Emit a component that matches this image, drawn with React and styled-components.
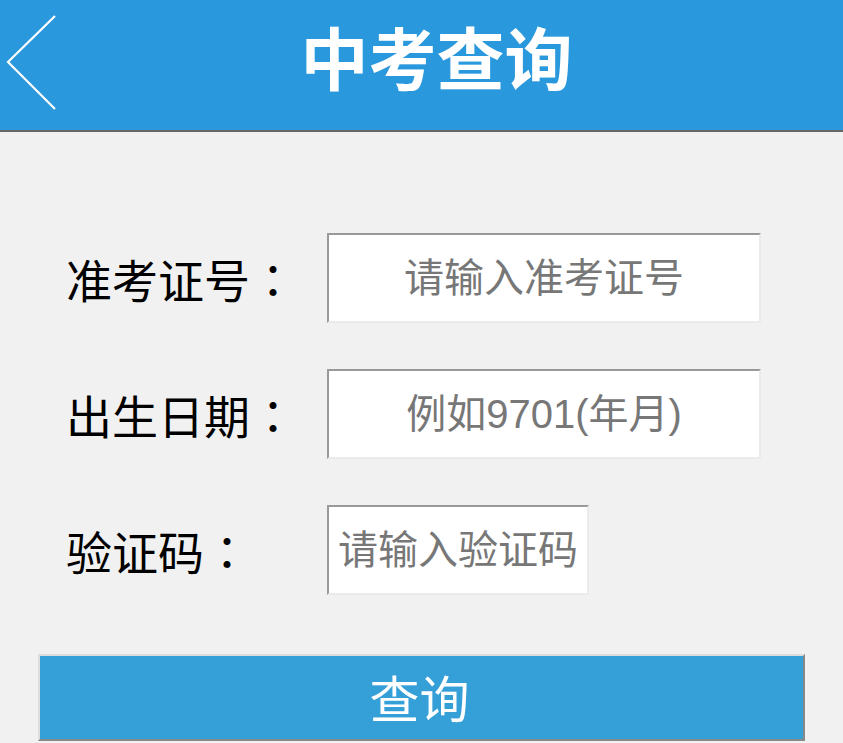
import React from 'react';
import styled, { createGlobalStyle } from 'styled-components';

const GlobalStyle = createGlobalStyle`
  body {
    margin: 0;
    background: #f1f1f1;
    font-family: "Liberation Sans", "Noto Sans CJK SC", sans-serif;
  }
`;

const Header = styled.header`
  position: relative;
  height: 130px;
  background: #2a98dc;
  border-bottom: 2px solid #666;
  display: flex;
  align-items: center;
  justify-content: center;
`;

const BackButton = styled.button`
  position: absolute;
  left: 0;
  top: 0;
  width: 70px;
  height: 130px;
  padding: 0;
  border: none;
  background: none;
  cursor: pointer;
`;

const Title = styled.h1`
  margin: 0 0 20px 30px;
  color: #fff;
  font-size: 68px;
  font-weight: bold;
  font-family: "Noto Sans CJK SC", sans-serif;
`;

const Form = styled.form`
  display: grid;
  grid-template-columns: 261px auto;
  row-gap: 46px;
  align-items: center;
  padding: 101px 0 0 66px;
`;

const Label = styled.label`
  color: #000;
  font-size: 46px;
  font-family: "Noto Sans CJK SC", sans-serif;
  white-space: nowrap;
  overflow: visible;
`;

const Colon = styled.span`
  font-family: "Noto Sans CJK TC", sans-serif;
`;

const Input = styled.input`
  box-sizing: border-box;
  width: ${(p) => p.$w}px;
  height: 90px;
  background: #fff;
  border-style: solid;
  border-width: 2px;
  border-color: #999 #ebebeb #ebebeb #999;
  font-size: 40px;
  font-family: "Liberation Sans", "Noto Sans CJK SC", sans-serif;
  text-align: center;
  padding: 0;
  outline: none;

  &::placeholder {
    color: #777;
  }
`;

const SubmitButton = styled.button`
  display: block;
  box-sizing: border-box;
  margin: 59px 0 0 38px;
  width: 767px;
  height: 87px;
  background: #359fd8;
  border-style: solid;
  border-width: 2px;
  border-color: #ddd #888 #888 #ddd;
  color: #fff;
  font-size: 50px;
  font-family: "Noto Sans CJK SC", sans-serif;
  padding: 0 4px 4px 0;
`;

const fields = [
  { label: '准考证号', placeholder: '请输入准考证号', width: 434 },
  { label: '出生日期', placeholder: '例如9701(年月)', width: 434 },
  { label: '验证码', placeholder: '请输入验证码', width: 262 },
];

export default function App() {
  return (
    <>
      <GlobalStyle />
      <Header>
        <BackButton type="button" aria-label="返回">
          <svg width="70" height="130" viewBox="0 0 70 130">
            <polyline
              points="55,16 8,62 55,109"
              fill="none"
              stroke="#fff"
              strokeWidth="2.2"
            />
          </svg>
        </BackButton>
        <Title>中考查询</Title>
      </Header>
      <Form onSubmit={(e) => e.preventDefault()}>
        {fields.map((f) => (
          <React.Fragment key={f.label}>
            <Label>
              {f.label}
              <Colon>：</Colon>
            </Label>
            <Input $w={f.width} placeholder={f.placeholder} />
          </React.Fragment>
        ))}
      </Form>
      <SubmitButton type="button">查询</SubmitButton>
    </>
  );
}
